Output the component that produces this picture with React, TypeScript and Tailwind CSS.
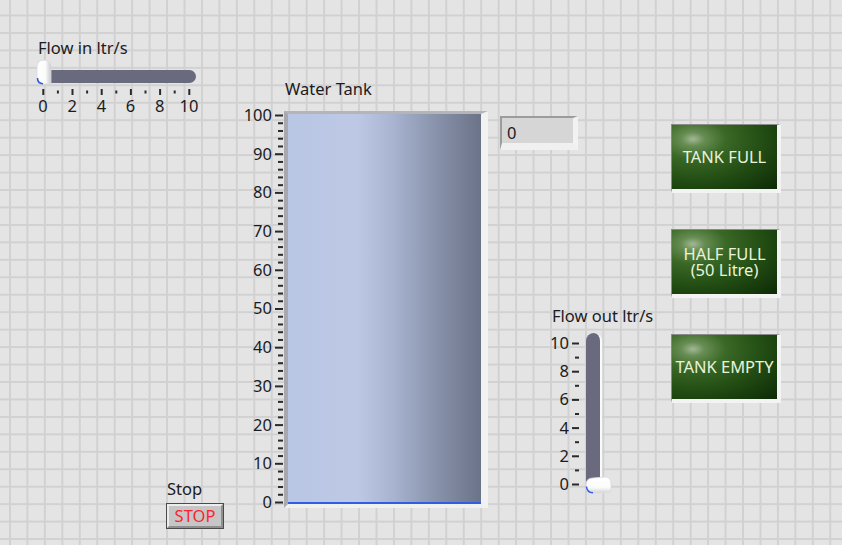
import React from "react";

const tankLabels = ["100", "90", "80", "70", "60", "50", "40", "30", "20", "10", "0"];
const outLabels = ["10", "8", "6", "4", "2", "0"];
const inLabels = ["0", "2", "4", "6", "8", "10"];

function HKnob() {
  return (
    <svg width="18" height="26" viewBox="0 0 18 26" className="absolute left-[-1px] top-[2px]">
      <defs>
        <linearGradient id="hk" x1="0" x2="1" y1="0" y2="0">
          <stop offset="0" stopColor="#ffffff" />
          <stop offset="0.6" stopColor="#fbfbfb" />
          <stop offset="1" stopColor="#c9c9cf" />
        </linearGradient>
      </defs>
      <path d="M2 8 Q2 1 9 1 Q16 1 16 8 L16 25 L7 25 Q2 25 2 20 Z" fill="url(#hk)" stroke="#d8d8de" strokeWidth="0.8" />
      <path d="M2.5 19 Q2.5 24.5 8 24.8" fill="none" stroke="#2f5ee6" strokeWidth="1.6" />
    </svg>
  );
}

function VKnob() {
  return (
    <svg width="28" height="18" viewBox="0 0 28 18" className="absolute left-[-2px] top-[143px]">
      <defs>
        <linearGradient id="vk" x1="0" x2="0" y1="0" y2="1">
          <stop offset="0" stopColor="#ffffff" />
          <stop offset="0.65" stopColor="#fbfbfb" />
          <stop offset="1" stopColor="#d3d3d8" />
        </linearGradient>
      </defs>
      <path d="M2 9 Q2 2 9 2 L21 1 Q27 1 27 8 L27 16 L9 17 Q2 17 2 12 Z" fill="url(#vk)" stroke="#dcdce0" strokeWidth="0.8" />
      <path d="M2.4 10.5 Q3 16.5 9 16.8" fill="none" stroke="#2f5ee6" strokeWidth="1.6" />
    </svg>
  );
}

function Led({ children }: { children: React.ReactNode }) {
  return (
    <div className="w-[110px] h-[69px] border-l border-t border-l-[#8a8a8a] border-t-[#8a8a8a] border-r-4 border-b-4 border-r-[#f3f3f3] border-b-[#f3f3f3]">
      <div className="w-full h-full flex items-center justify-center text-center leading-[16px] text-[#e8f3dc] bg-[radial-gradient(ellipse_at_20%_22%,#a3b896_0%,#668c52_10%,#3a6826_28%,#234e14_58%,#0d2a06_100%)] whitespace-nowrap">
        {children}
      </div>
    </div>
  );
}

export default function App() {
  return (
    <div className="relative w-[842px] h-[545px] overflow-hidden font-['Noto_Sans',sans-serif] text-[16.5px] leading-[18px] text-[#1b1b22] bg-[#e4e4e4] bg-[linear-gradient(to_right,#d1d1d1_2px,transparent_2px),linear-gradient(to_bottom,#d1d1d1_2px,transparent_2px)] bg-[size:17.46px_17.46px] bg-[position:9px_14.5px]">
      {/* Flow in slider */}
      <div className="absolute left-[36px] top-[39px] flex flex-col">
        <span className="ml-[2px] h-[18px]">Flow in ltr/s</span>
        <div className="relative w-[162px]">
          <div className="ml-[2px] mt-[13px] w-[158px] h-[13px] rounded-full bg-[#6a6a7f]" />
          <HKnob />
        </div>
        <svg width="160" height="8" className="ml-[2px] mt-[5px]">
          {inLabels.map((_, i) => (
            <rect key={i} x={4.3 + i * 29.2} y="1" width="2" height="6" fill="#2a2a2a" />
          ))}
          {inLabels.slice(1).map((_, i) => (
            <rect key={i} x={18.9 + i * 29.2} y="2.5" width="2" height="3" fill="#2a2a2a" />
          ))}
        </svg>
        <div className="-ml-[5px] mt-[1px] w-[170px] flex justify-between">
          {inLabels.map((l) => (
            <span key={l} className="w-6 text-center">{l}</span>
          ))}
        </div>
      </div>

      {/* Water tank */}
      <div className="absolute left-[240px] top-[80px] flex flex-col">
        <span className="ml-[45px] h-[18px]">Water Tank</span>
        <div className="mt-[8px] flex items-start">
          <div className="h-[405px] w-8 flex flex-col justify-between items-end">
            {tankLabels.map((l) => (
              <span key={l} className="h-[18px]">{l}</span>
            ))}
          </div>
          <svg width="10" height="392" className="ml-[3px] mt-[6px]">
            {Array.from({ length: 51 }).map((_, i) => {
              const y = 3.5 + i * 7.74;
              const major = i % 5 === 0;
              return (
                <rect key={i} x={major ? 0 : 3} y={y - 1} width={major ? 8 : 5} height="2" fill="#2a2a2a" />
              );
            })}
          </svg>
          <div className="-ml-[1px] mt-[5px] w-[204px] h-[397px] border-l-4 border-t-[3px] border-r-[7px] border-b-[4px] border-l-[#a9a9ad] border-t-[#b5b5b8] border-r-[#f2f2f2] border-b-[#f0f0f0]">
            <div className="w-full h-full flex flex-col justify-end bg-[linear-gradient(to_right,#b9c6e4_0%,#bdc9e4_36%,#a7b3cf_55%,#8690a8_78%,#6b7388_100%)]">
              <div className="h-[2px] bg-[#2f5ee6]" />
            </div>
          </div>
        </div>
      </div>

      {/* Numeric indicator */}
      <div className="absolute left-[500px] top-[116px] w-[78px] h-[34px] border-l-2 border-t-2 border-r-[5px] border-b-[7px] border-l-[#9c9c9c] border-t-[#9c9c9c] border-r-[#f2f2f2] border-b-[#f0f0f0] bg-[#d6d6d6] pl-[5px] pt-[6px]">
        0
      </div>

      {/* LEDs */}
      <div className="absolute left-[671px] top-[124px] flex flex-col gap-9">
        <Led>TANK FULL</Led>
        <Led>
          <p>
            HALF FULL
            <br />
            (50 Litre)
          </p>
        </Led>
        <Led>TANK EMPTY</Led>
      </div>

      {/* Flow out slider */}
      <div className="absolute left-[537px] top-[307px] flex flex-col">
        <span className="ml-[15px] h-[18px]">Flow out ltr/s</span>
        <div className="mt-[9px] flex items-start">
          <div className="h-[159px] w-8 flex flex-col justify-between items-end">
            {outLabels.map((l) => (
              <span key={l} className="h-[18px]">{l}</span>
            ))}
          </div>
          <svg width="9" height="150" className="ml-[2px] mt-[4px]">
            {outLabels.map((_, i) => (
              <rect key={i} x="1" y={4.5 + i * 28.2} width="7" height="2" fill="#2a2a2a" />
            ))}
            {outLabels.slice(1).map((_, i) => (
              <rect key={i} x="4" y={18.6 + i * 28.2} width="4" height="2" fill="#2a2a2a" />
            ))}
          </svg>
          <div className="relative ml-[6px] -mt-[1px]">
            <div className="w-[16px] h-[157px] rounded-full border-r-2 border-r-[#fafafa] bg-[#6a6a7f]" />
            <VKnob />
          </div>
        </div>
      </div>

      {/* Stop button */}
      <div className="absolute left-[166px] top-[480px] flex flex-col">
        <span className="ml-[1px] h-[18px]">Stop</span>
        <div className="mt-[5px] w-[58px] h-[26px] border border-[#4b4b4b] bg-[#c6c6c6]">
          <div className="w-full h-full flex items-center justify-center border-t-2 border-l-2 border-t-[#ececec] border-l-[#ececec] border-b-2 border-r-2 border-b-[#8f8f8f] border-r-[#8f8f8f] text-[#ff1f2f]">
            STOP
          </div>
        </div>
      </div>
    </div>
  );
}
